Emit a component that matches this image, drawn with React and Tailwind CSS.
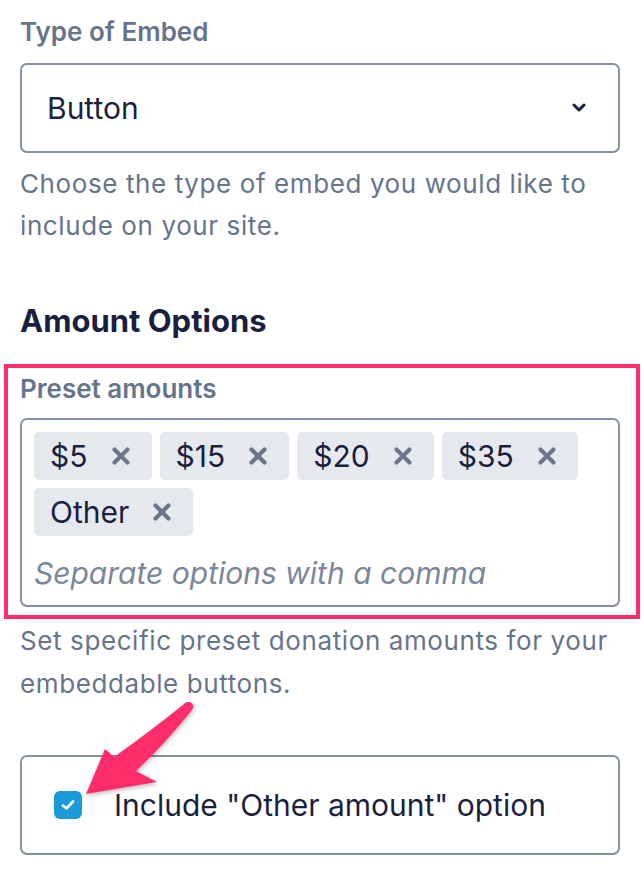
import React from "react"

const tags = ["$5", "$15", "$20", "$35", "Other"]

function XIcon() {
  return (
    <svg width="20" height="20" viewBox="0 0 20 20" className="shrink-0">
      <path d="M3.5 3.5 L16.5 16.5 M16.5 3.5 L3.5 16.5" stroke="#6b7689" strokeWidth="4.2" strokeLinecap="round" />
    </svg>
  )
}

function Arrow() {
  return (
    <svg
      width="140"
      height="110"
      viewBox="0 0 140 110"
      className="absolute left-[60px] top-[695px] pointer-events-none drop-shadow-[1px_2px_2px_rgba(0,0,0,0.25)]"
    >
      <path
        d="M124 9 C129 4 136 9 132 15 Q104 50 76 76 L97 87 L26 99 L45 54 L54 62 Q92 35 124 9 Z"
        fill="#ff2d6b"
      />
    </svg>
  )
}

export default function App() {
  return (
    <div className="relative w-[644px] min-h-[890px] bg-white flex font-['Inter',sans-serif]">
      <div className="flex-1 pl-5 pr-5 pt-4">
        <label className="block text-[26px] leading-[32px] font-semibold text-[#66748b]">Type of Embed</label>
        <div className="mt-[15px] h-[90px] w-[600px] border-2 border-[#8391a6] rounded-[7px] flex items-center justify-between pl-[25px] pr-[32px]">
          <span className="text-[30px] text-[#1b1f3e]">Button</span>
          <svg width="14" height="10" viewBox="0 0 14 10">
            <path d="M2 2 L7 7 L12 2" stroke="#1b1f3e" strokeWidth="3" fill="none" strokeLinecap="round" strokeLinejoin="round" />
          </svg>
        </div>
        <p className="mt-[10px] text-[26px] leading-[42px] tracking-[0.6px] text-[#66748b]">
          Choose the type of embed you would like to include on your site.
        </p>

        <h2 className="mt-[56px] text-[31px] leading-[36px] font-bold text-[#1b1f3e]">Amount Options</h2>

        <div className="mt-[25px] -ml-4 border-4 border-[#ff2d6b] pl-3 pr-4 pt-[6px] pb-2">
          <label className="block text-[26px] leading-[30px] font-semibold text-[#66748b]">Preset amounts</label>
          <div className="mt-[14px] w-[600px] border-2 border-[#8391a6] rounded-[7px] pt-3 pb-[14px] px-3">
            <div className="flex flex-wrap gap-x-[8px] gap-y-2">
              {tags.map((t) => (
                <div
                  key={t}
                  className="h-12 bg-[#e5e8ed] rounded-[5px] flex items-center pl-[16px] pr-[21px] gap-[23px]"
                >
                  <span className="text-[30px] text-[#1b1f3e]">{t}</span>
                  <XIcon />
                </div>
              ))}
            </div>
            <div className="mt-[19px] text-[30px] leading-[36px] italic text-[#7a869a]">
              Separate options with a comma
            </div>
          </div>
        </div>

        <p className="text-[26px] leading-[43px] tracking-[0.6px] text-[#66748b]">
          Set specific preset donation amounts for your embeddable buttons.
        </p>

        <div className="mt-[50px] w-[600px] h-[100px] border-2 border-[#8391a6] rounded-[7px] flex items-center pl-[32px]">
          <div className="w-7 h-7 rounded-[6px] bg-[#1a9bd8] flex items-center justify-center">
            <svg width="14" height="12" viewBox="0 0 14 12">
              <path d="M2 6.5 L5.5 9.5 L12 2.5" stroke="#fff" strokeWidth="2.6" fill="none" strokeLinecap="round" strokeLinejoin="round" />
            </svg>
          </div>
          <span className="ml-[32px] text-[30px] text-[#1b1f3e]">Include "Other amount" option</span>
        </div>
      </div>
      <div className="w-1 bg-[#f2f3f5]" />
      <Arrow />
    </div>
  )
}
